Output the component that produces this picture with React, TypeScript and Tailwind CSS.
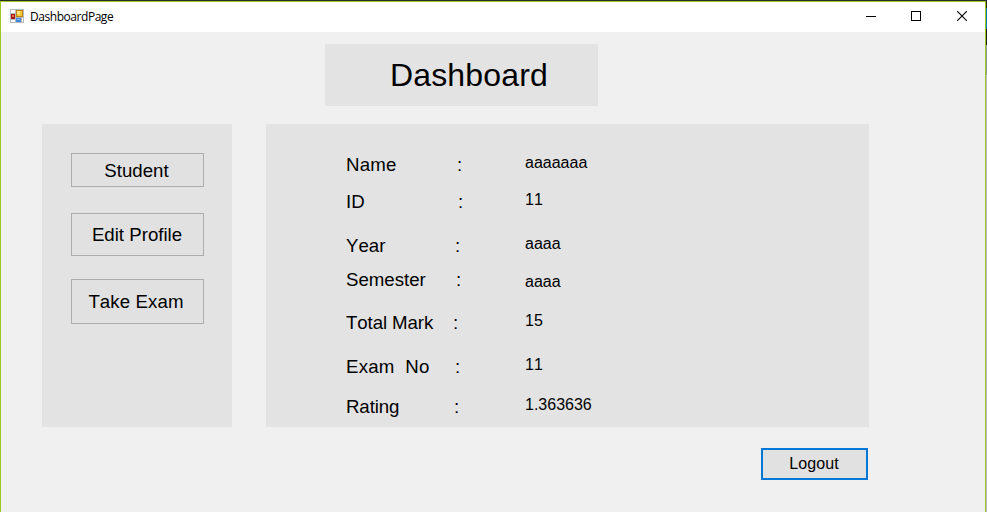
import React from 'react';

const labels = [
  { text: 'Name', row: 'mt-[31px]', label: 'w-[111px] tracking-[0.2px]' },
  { text: 'ID', row: 'mt-[17px]', label: 'w-[112px]' },
  { text: 'Year', row: 'mt-6', label: 'w-[109px]' },
  { text: 'Semester', row: 'mt-[14px]', label: 'w-[110px]' },
  { text: 'Total Mark', row: 'mt-[23px]', label: 'w-[107px] tracking-[-0.1px]' },
  { text: 'Exam  No', row: 'mt-6', label: 'w-[109px] tracking-[0.2px]' },
  { text: 'Rating', row: 'mt-5', label: 'w-[108px] tracking-[-0.1px]' },
];

const values = [
  { text: 'aaaaaaa', row: 'mt-[29px]' },
  { text: '11', row: 'mt-[17px]' },
  { text: 'aaaa', row: 'mt-6' },
  { text: 'aaaa', row: 'mt-[18px]' },
  { text: '15', row: 'mt-[19px]' },
  { text: '11', row: 'mt-6' },
  { text: '1.363636', row: 'mt-5' },
];

function AppIcon() {
  return (
    <svg width="14" height="14" viewBox="0 0 14 14" shapeRendering="crispEdges">
      <rect width="14" height="14" fill="#b9b9b9" />
      <rect x="1" y="1" width="4" height="3" fill="#fff" />
      <rect x="1" y="11" width="4" height="2" fill="#fff" />
      <rect x="12" y="9" width="1" height="4" fill="#fff" />
      <rect x="6" y="1" width="7" height="7" fill="#b98512" />
      <rect x="7" y="2" width="5" height="5" fill="#fbc83c" />
      <rect x="7" y="2" width="3" height="3" fill="#ffe27e" />
      <rect x="1" y="5" width="4" height="5" fill="#a31712" />
      <rect x="2" y="6" width="2" height="2" fill="#ee6a5c" />
      <rect x="6" y="9" width="5" height="4" fill="#4384e0" />
      <rect x="7" y="10" width="3" height="1" fill="#8dbcfa" />
    </svg>
  );
}

function TitleBar() {
  return (
    <header className="flex h-[30px] items-start bg-white">
      <div className="ml-[9px] mt-[7px]"><AppIcon /></div>
      <span className="ml-[6px] mt-[6px] font-['Open_Sans','Noto_Sans',sans-serif] text-[12px] leading-[18px] tracking-[-0.45px] text-black">DashboardPage</span>
      <div className="ml-auto mr-[18px] mt-[9px] flex text-black">
        <svg className="mr-[35px]" width="10" height="10" shapeRendering="crispEdges"><rect y="5" width="10" height="1" /></svg>
        <svg className="mr-[36px]" width="10" height="10" shapeRendering="crispEdges"><rect x=".5" y=".5" width="9" height="9" fill="none" stroke="currentColor" /></svg>
        <svg width="10" height="10"><path d="M0 0L10 10M10 0L0 10" stroke="currentColor" strokeWidth="1.1" /></svg>
      </div>
    </header>
  );
}

export default function App() {
  return (
    <div className="flex h-[512px] w-[987px] flex-col overflow-hidden bg-[#f0f0f0] font-['Liberation_Sans',Arial,sans-serif] text-black [font-kerning:none]">
      <div className="h-px shrink-0 bg-[#2b2b2b]" />
      <div className="flex min-h-0 flex-1">
        <div className="flex min-w-0 flex-1 flex-col border-x border-t border-[#9aca1e]">
          <TitleBar />
          <main className="flex flex-col pt-3">
            <h1 className="ml-[324px] h-[62px] w-[273px] bg-[#e3e3e3] pl-[65px] text-[32px] leading-[63px] tracking-[0.15px]">Dashboard</h1>
            <div className="mt-[18px] flex pl-[41px]">
              <nav className="flex h-[303px] w-[190px] flex-col items-start bg-[#e3e3e3] pl-[29px] pt-[29px] text-[18.67px]">
                <button className="h-[34px] w-[133px] border border-[#adadad] bg-[#e1e1e1] pr-[2px] pt-[2px]">Student</button>
                <button className="mt-[26px] h-[43px] w-[133px] border border-[#adadad] bg-[#e1e1e1] pr-[1px]">Edit Profile</button>
                <button className="mt-[23px] h-[45px] w-[133px] border border-[#adadad] bg-[#e1e1e1] pr-[3px] tracking-[0.1px]">Take Exam</button>
              </nav>
              <section className="ml-[34px] flex h-[303px] w-[603px] bg-[#e3e3e3] pl-[80px]">
                <div className="w-[179px]">
                  {labels.map((l) => (
                    <div key={l.text} className={`flex h-5 whitespace-pre text-[18.67px] leading-5 ${l.row}`}>
                      <span className={l.label}>{l.text}</span>
                      <span>:</span>
                    </div>
                  ))}
                </div>
                <div>
                  {values.map((v, i) => (
                    <div key={i} className={`h-5 text-[16px] leading-5 ${v.row}`}>{v.text}</div>
                  ))}
                </div>
              </section>
            </div>
            <button className="ml-[760px] mt-[21px] h-8 w-[107px] border-2 border-[#0078d7] bg-[#e1e1e1] pr-[1px] text-[16px] leading-7 tracking-[0.1px]">Logout</button>
          </main>
        </div>
        <div className="flex w-px flex-col">
          <div className="h-[7px] bg-[#202020]" />
          <div className="h-[21px] bg-[#0078b8]" />
          <div className="h-4 bg-[#1c1c1c]" />
          <div className="h-[30px] bg-[#8a9a9e]" />
          <div className="flex-1 bg-[#c0b4cc]" />
        </div>
      </div>
    </div>
  );
}
